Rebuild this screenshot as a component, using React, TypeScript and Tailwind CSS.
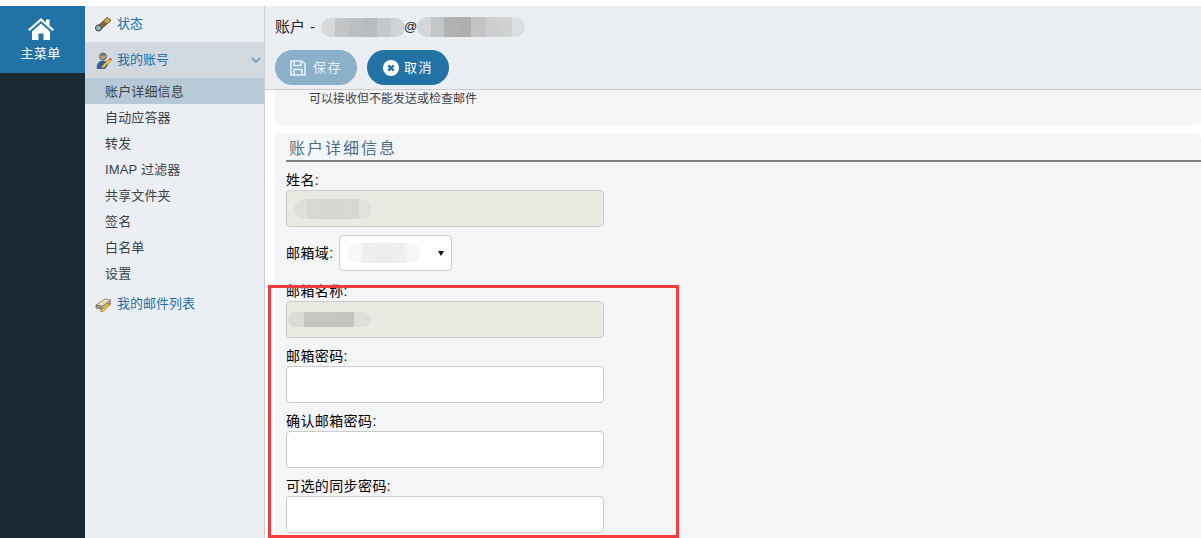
import React from "react";

const Mosaic = ({ w, h, colors, className = "" }: { w: number; h: number; colors: string[]; className?: string }) => (
  <span className={"flex overflow-hidden rounded-full " + className} style={{ width: w, height: h }}>
    {colors.map((c, i) => (
      <span key={i} className="h-full flex-1" style={{ background: c }} />
    ))}
  </span>
);

const Spyglass = () => (
  <svg width="17" height="16" viewBox="0 0 17 16" className="shrink-0">
    <path d="M1.5 11 L12.5 1.5 L16 4.5 L5 14 Z" fill="#8a6a2c" stroke="#4a3a1c" strokeWidth="0.8" />
    <path d="M8.5 5 L12.5 1.5 L16 4.5 L12 8 Z" fill="#c9a85a" stroke="#5c4a20" strokeWidth="0.6" />
    <ellipse cx="3.5" cy="12" rx="3" ry="3" fill="#8fb3c4" stroke="#3f3f3f" strokeWidth="1" />
  </svg>
);

const UserIcon = () => (
  <svg width="16" height="17" viewBox="0 0 16 17" className="shrink-0">
    <circle cx="7" cy="4.5" r="3.5" fill="#b59a7c" stroke="#555" strokeWidth="0.8" />
    <path d="M4 3.5 Q7 -1 10 3.5 Z" fill="#6d6d6d" />
    <path d="M1 16.5 Q1 9 7 9 Q11 9 11.5 13 L9 16.5 Z" fill="#2f5f9e" stroke="#1e3f6e" strokeWidth="0.6" />
    <path d="M6 14 L13 7 L15 8.5 L8 15.5 L5.5 16 Z" fill="#f0c93a" stroke="#8a6d10" strokeWidth="0.6" />
    <path d="M13 7 L15 8.5 L15.8 7 L14.2 6 Z" fill="#c8403a" />
  </svg>
);

const BookIcon = () => (
  <svg width="17" height="15" viewBox="0 0 17 15" className="shrink-0">
    <path d="M1 8 L10 2 L15.5 3 L7 9.5 Z" fill="#e8e2b8" stroke="#6a6a50" strokeWidth="0.7" />
    <path d="M1 8 L7 9.5 L7 12.5 L1 11 Z" fill="#9a9a8a" stroke="#5a5a4a" strokeWidth="0.6" />
    <path d="M7 9.5 L15.5 3 L15.5 5.5 L7 12.5 Z" fill="#c8c8b0" stroke="#6a6a50" strokeWidth="0.6" />
    <path d="M6 13 L13 6.5 L15 8 L8 14.5 L5.5 14.8 Z" fill="#f0c93a" stroke="#8a6d10" strokeWidth="0.6" />
    <path d="M13 6.5 L15 8 L16 6.8 L14.3 5.5 Z" fill="#c8403a" />
  </svg>
);

const subItems = ["账户详细信息", "自动应答器", "转发", "IMAP 过滤器", "共享文件夹", "签名", "白名单", "设置"];

const inputBase = "block w-[318px] h-[37px] rounded-[4px] border border-[#cccccc]";

const Field = ({ label, children, top }: { label: string; children?: React.ReactNode; top: string }) => (
  <div className={top}>
    <div className="h-[20px] text-[14px] leading-[20px] tracking-[0.4px] text-black">{label}</div>
    {children}
  </div>
);

export default function App() {
  return (
    <div
      className="relative flex h-[538px] w-[1201px] overflow-hidden bg-white pt-[6px]"
      style={{ fontFamily: '"Liberation Sans", "Noto Sans CJK SC", sans-serif' }}
    >
      {/* Main menu column */}
      <div className="flex w-[85px] shrink-0 flex-col bg-[#1c2b33]">
        <div className="flex h-[67px] flex-col items-center bg-[#2272a5] pr-[4px] pt-[12px] text-white">
          <svg width="26" height="22" viewBox="0 0 26 22" fill="#ffffff">
            <path d="M13 0 L18 4.4 V1.5 H21.5 V7.5 L26 11.5 L24.5 13 L13 3 L1.5 13 L0 11.5 Z" />
            <path d="M4 13.5 L13 5.5 L22 13.5 V22 H15.5 V15.5 H10.5 V22 H4 Z" />
          </svg>
          <div className="mt-[5px] text-[13px] leading-[18px] tracking-[0.4px]">主菜单</div>
        </div>
      </div>

      {/* Secondary sidebar */}
      <div className="flex w-[180px] shrink-0 flex-col border-r border-[#cccccc] bg-[#ebeef2] text-[13px]">
        <div className="flex h-[36px] items-center gap-[5px] pl-[10px] text-[#2272a5]">
          <Spyglass />
          <span>状态</span>
        </div>
        <div className="flex h-[36px] items-center gap-[5px] bg-[#d1d8df] pl-[11px] pr-[3px] text-[#2272a5]">
          <UserIcon />
          <span className="flex-1">我的账号</span>
          <svg width="10" height="6" viewBox="0 0 10 6" fill="none" stroke="#5a8db5" strokeWidth="1.4">
            <path d="M1 1 L5 5 L9 1" />
          </svg>
        </div>
        {subItems.map((s, i) => (
          <div
            key={s}
            className={
              "flex h-[26px] items-center pl-[20px] pt-[1px] tracking-[0.15px] text-[#3c4246] " +
              (i === 0 ? "bg-[#b5cad6]" : "")
            }
          >
            {s}
          </div>
        ))}
        <div className="flex h-[36px] items-center gap-[5px] pl-[10px] text-[#2272a5]">
          <BookIcon />
          <span>我的邮件列表</span>
        </div>
      </div>

      {/* Main area */}
      <div className="flex min-w-0 flex-1 flex-col overflow-hidden">
        <div className="h-[84px] shrink-0 border-b border-[#cccccc] bg-[#ebeef2] pl-[10px]">
          <div className="flex h-[44px] items-center pb-[2px] text-[15px] text-[#222222]">
            <span>账户</span>
            <span className="ml-[5px]">-</span>
            <Mosaic
              w={84}
              h={19}
              colors={["#d6d8da", "#c2c4c6", "#bcbfc1", "#b9bcbe", "#c5c8ca", "#d0d3d5"]}
              className="ml-[6px]"
            />
            <span className="ml-[-1px] text-[13px]">@</span>
            <Mosaic
              w={108}
              h={20}
              colors={["#d4d6d8", "#c3c6c8", "#b2b3b1", "#adb0b1", "#c5c4c2", "#cccfd1", "#d0d1d1", "#dcdfe1"]}
            />
          </div>
          <div className="flex gap-[10px]">
            <div className="flex h-[35px] w-[82px] items-center justify-center gap-[7px] rounded-full bg-[#8ab0ca] text-[13px] tracking-[1.5px] text-[#e6eef4]">
              <svg width="16" height="16" viewBox="0 0 16 16" fill="none" stroke="#e6eef4" strokeWidth="1.6">
                <path d="M1 1 H12 L15 4 V15 H1 Z" />
                <path d="M4 1 V5.5 H11 V1" />
                <path d="M4 15 V9.5 H12 V15" />
              </svg>
              <span>保存</span>
            </div>
            <div className="flex h-[35px] w-[82px] items-center justify-center gap-[5px] rounded-full bg-[#2272a5] text-[13px] tracking-[1.5px] text-white">
              <svg width="16" height="16" viewBox="0 0 16 16">
                <circle cx="8" cy="8" r="8" fill="#ffffff" />
                <path d="M5.3 5.3 L10.7 10.7 M10.7 5.3 L5.3 10.7" stroke="#2272a5" strokeWidth="2.4" />
              </svg>
              <span>取消</span>
            </div>
          </div>
        </div>

        <div className="flex flex-col pl-[10px]">
          <div className="h-[35px] rounded-b-[6px] bg-[#f4f5f7] pl-[34px] pt-[1px] text-[12px] leading-[17px] text-[#3c4246]">
            可以接收但不能发送或检查邮件
          </div>
          <div className="mt-[8px] h-[420px] rounded-t-[6px] bg-[#f4f5f7] pl-[11px]">
            <div className="h-[29px] border-b-2 border-[#808080] pl-[3px] pt-[2px] text-[16px] leading-[28px] tracking-[2px] text-[#4d6f8c]">
              账户详细信息
            </div>
            <Field label="姓名:" top="mt-[8px]">
              <div className={inputBase + " flex items-center bg-[#eaeae3] pl-[7px]"}>
                <Mosaic w={78} h={20} colors={["#e0e0da", "#d8d8d2", "#d6d6d0", "#d4d6d0", "#d8d8d2", "#e2e2dc"]} />
              </div>
            </Field>
            <div className="mt-[8px] flex h-[36px] items-center text-[14px] tracking-[0.4px] text-black">
              <span className="w-[53px]">邮箱域:</span>
              <div className="flex h-[36px] w-[113px] items-center justify-between rounded-[4px] border border-[#cccccc] bg-white pl-[7px] pr-[7px]">
                <Mosaic w={73} h={20} colors={["#f8f8f8", "#eeefef", "#ecedec", "#eeefee", "#f4f5f5"]} />
                <span className="h-0 w-0 border-x-[3px] border-t-[5px] border-x-transparent border-t-[#111111]" />
              </div>
            </div>
            <Field label="邮箱名称:" top="mt-[10px]">
              <div className={inputBase + " flex items-center bg-[#eaeae3] pl-[1px]"}>
                <Mosaic w={82} h={15} colors={["#dcdcd6", "#c6c5c0", "#c4c6c2", "#c5c5c0", "#dededa"]} />
              </div>
            </Field>
            <Field label="邮箱密码:" top="mt-[8px]">
              <div className={inputBase + " bg-white"} />
            </Field>
            <Field label="确认邮箱密码:" top="mt-[8px]">
              <div className={inputBase + " bg-white"} />
            </Field>
            <Field label="可选的同步密码:" top="mt-[8px]">
              <div className={inputBase + " bg-white"} />
            </Field>
          </div>
        </div>
      </div>

      {/* Red annotation rectangle */}
      <div className="pointer-events-none absolute left-[268px] top-[285px] h-[253px] w-[411px] border-[3px] border-[#f53c3c]" />
    </div>
  );
}
